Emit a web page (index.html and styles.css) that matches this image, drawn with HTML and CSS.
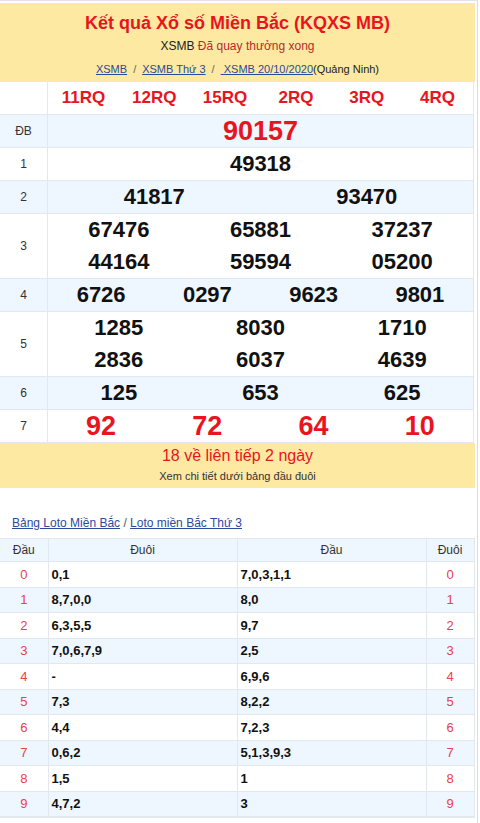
FILE: index.html
```html
<!DOCTYPE html>
<html lang="vi">
<head>
<meta charset="utf-8">
<title>XSMB</title>
<link rel="stylesheet" href="styles.css">
</head>
<body>
<div class="page">
  <div class="wrap">
    <div class="head">
      <h1 class="title">Kết quả Xổ số Miền Bắc (KQXS MB)</h1>
      <div class="status"><span class="dark">XSMB</span> Đã quay thưởng xong</div>
      <div class="crumbs"><a href="#">XSMB</a><span class="sep">/</span><a href="#">XSMB Thứ 3</a><span class="sep">/</span><a href="#">&nbsp;XSMB 20/10/2020</a>(Quảng Ninh)</div>
    </div>

    <table class="kq">
      <tr class="codes">
        <td class="lbl"></td>
        <td><div class="g g6"><span>11RQ</span><span>12RQ</span><span>15RQ</span><span>2RQ</span><span>3RQ</span><span>4RQ</span></div></td>
      </tr>
      <tr class="alt">
        <td class="lbl">ĐB</td>
        <td><div class="g g1 big red"><span>90157</span></div></td>
      </tr>
      <tr>
        <td class="lbl">1</td>
        <td><div class="g g1"><span>49318</span></div></td>
      </tr>
      <tr class="alt">
        <td class="lbl">2</td>
        <td><div class="g g2"><span>41817</span><span>93470</span></div></td>
      </tr>
      <tr>
        <td class="lbl">3</td>
        <td><div class="g g3"><span>67476</span><span>65881</span><span>37237</span><span>44164</span><span>59594</span><span>05200</span></div></td>
      </tr>
      <tr class="alt">
        <td class="lbl">4</td>
        <td><div class="g g4"><span>6726</span><span>0297</span><span>9623</span><span>9801</span></div></td>
      </tr>
      <tr>
        <td class="lbl">5</td>
        <td><div class="g g3"><span>1285</span><span>8030</span><span>1710</span><span>2836</span><span>6037</span><span>4639</span></div></td>
      </tr>
      <tr class="alt">
        <td class="lbl">6</td>
        <td><div class="g g3"><span>125</span><span>653</span><span>625</span></div></td>
      </tr>
      <tr>
        <td class="lbl">7</td>
        <td><div class="g g4 big red"><span>92</span><span>72</span><span>64</span><span>10</span></div></td>
      </tr>
    </table>

    <div class="note">
      <div class="note-main">18 về liên tiếp 2 ngày</div>
      <div class="note-sub">Xem chi tiết dưới bảng đầu đuôi</div>
    </div>

    <div class="loto-links"><a href="#">Bảng Loto Miền Bắc</a> / <a href="#">Loto miền Bắc Thứ 3</a></div>

    <table class="loto">
      <colgroup><col class="c1"><col class="c2"><col class="c3"><col class="c4"></colgroup>
      <tr class="lh"><th>Đầu</th><th>Đuôi</th><th>Đầu</th><th>Đuôi</th></tr>
      <tr><td class="n">0</td><td class="v">0,1</td><td class="v">7,0,3,1,1</td><td class="n">0</td></tr>
      <tr class="alt"><td class="n">1</td><td class="v">8,7,0,0</td><td class="v">8,0</td><td class="n">1</td></tr>
      <tr><td class="n">2</td><td class="v">6,3,5,5</td><td class="v">9,7</td><td class="n">2</td></tr>
      <tr class="alt"><td class="n">3</td><td class="v">7,0,6,7,9</td><td class="v">2,5</td><td class="n">3</td></tr>
      <tr><td class="n">4</td><td class="v">-</td><td class="v">6,9,6</td><td class="n">4</td></tr>
      <tr class="alt"><td class="n">5</td><td class="v">7,3</td><td class="v">8,2,2</td><td class="n">5</td></tr>
      <tr><td class="n">6</td><td class="v">4,4</td><td class="v">7,2,3</td><td class="n">6</td></tr>
      <tr class="alt"><td class="n">7</td><td class="v">0,6,2</td><td class="v">5,1,3,9,3</td><td class="n">7</td></tr>
      <tr><td class="n">8</td><td class="v">1,5</td><td class="v">1</td><td class="n">8</td></tr>
      <tr class="alt"><td class="n">9</td><td class="v">4,7,2</td><td class="v">3</td><td class="n">9</td></tr>
    </table>
  </div>
</div>
</body>
</html>
```

FILE: styles.css
```css
html, body {
  margin: 0;
  padding: 0;
  background: #fff;
}
body {
  font-family: "Liberation Sans", Arial, sans-serif;
  color: #222;
}
.page {
  width: 477px;
  border-top: 1px solid #e3e3e3;
  border-right: 1px solid #dcdcdc;
  padding-top: 2px;
  min-height: 820px;
}
.wrap {
  width: 475px;
}
.head {
  background: #fde9a1;
  text-align: center;
  padding: 9px 0 4px;
  height: 66px;
}
.title {
  margin: 0;
  font-size: 18px;
  line-height: 22px;
  font-weight: bold;
  color: #e8141e;
}
.status {
  font-size: 12px;
  line-height: 20px;
  margin-top: 2px;
  color: #c0272d;
}
.status .dark { color: #222; }
.crumbs {
  font-size: 11px;
  line-height: 20px;
  margin-top: 3px;
  color: #222;
}
.crumbs a {
  color: #2b4a9b;
  text-decoration: underline;
}
.crumbs .sep {
  color: #666;
  margin: 0 6px;
}

.kq {
  width: 474px;
  border-collapse: collapse;
  table-layout: fixed;
}
.kq td {
  border: 1px solid #e3e8ef;
  padding: 0;
}
.kq tr:first-child td { border-top: none; }
.kq td:first-child { border-left: none; }
.kq .lbl {
  width: 47px;
  text-align: center;
  font-size: 12px;
  color: #333;
}
.kq tr.alt td { background: #eef6ff; }
.g {
  display: grid;
  text-align: center;
  font-weight: bold;
  font-size: 22px;
  line-height: 32px;
  color: #111;
}
.g1 { grid-template-columns: 1fr; }
.g2 { grid-template-columns: 1fr 1fr; }
.g3 { grid-template-columns: 1fr 1fr 1fr; }
.g4 { grid-template-columns: repeat(4, 1fr); }
.g6 { grid-template-columns: repeat(6, 1fr); }
.codes .g {
  font-size: 17px;
  color: #e8141e;
}
.g.big { font-size: 27px; }
.g.red { color: #e8141e; }

.note {
  background: #fde9a1;
  text-align: center;
  padding: 2px 0 3px;
}
.note-main {
  color: #e8141e;
  font-size: 16px;
  line-height: 22px;
}
.note-sub {
  font-size: 11px;
  line-height: 18px;
  color: #333;
}
.loto-links {
  padding: 26px 0 0 12px;
  font-size: 12px;
  line-height: 18px;
  height: 24px;
  color: #555;
}
.loto-links a {
  color: #2b4a9b;
  text-decoration: underline;
}
.loto {
  width: 474px;
  border-collapse: collapse;
  table-layout: fixed;
  border-bottom: 2px solid #e3e8ef;
}
.loto col.c1 { width: 48px; }
.loto col.c2 { width: 189px; }
.loto col.c3 { width: 189px; }
.loto col.c4 { width: 48px; }
.loto th, .loto td {
  border: 1px solid #e3e8ef;
  height: 24.5px;
  padding: 0;
}
.loto tr th:first-child, .loto tr td:first-child { border-left: none; }
.loto th {
  background: #eef6ff;
  font-weight: normal;
  font-size: 12px;
  color: #333;
  height: 22px;
}
.loto tr.alt td { background: #eef6ff; }
.loto td.n {
  text-align: center;
  color: #e8424a;
  font-size: 13px;
}
.loto td.v {
  font-weight: bold;
  font-size: 13px;
  color: #111;
  padding-left: 3px;
}
```
